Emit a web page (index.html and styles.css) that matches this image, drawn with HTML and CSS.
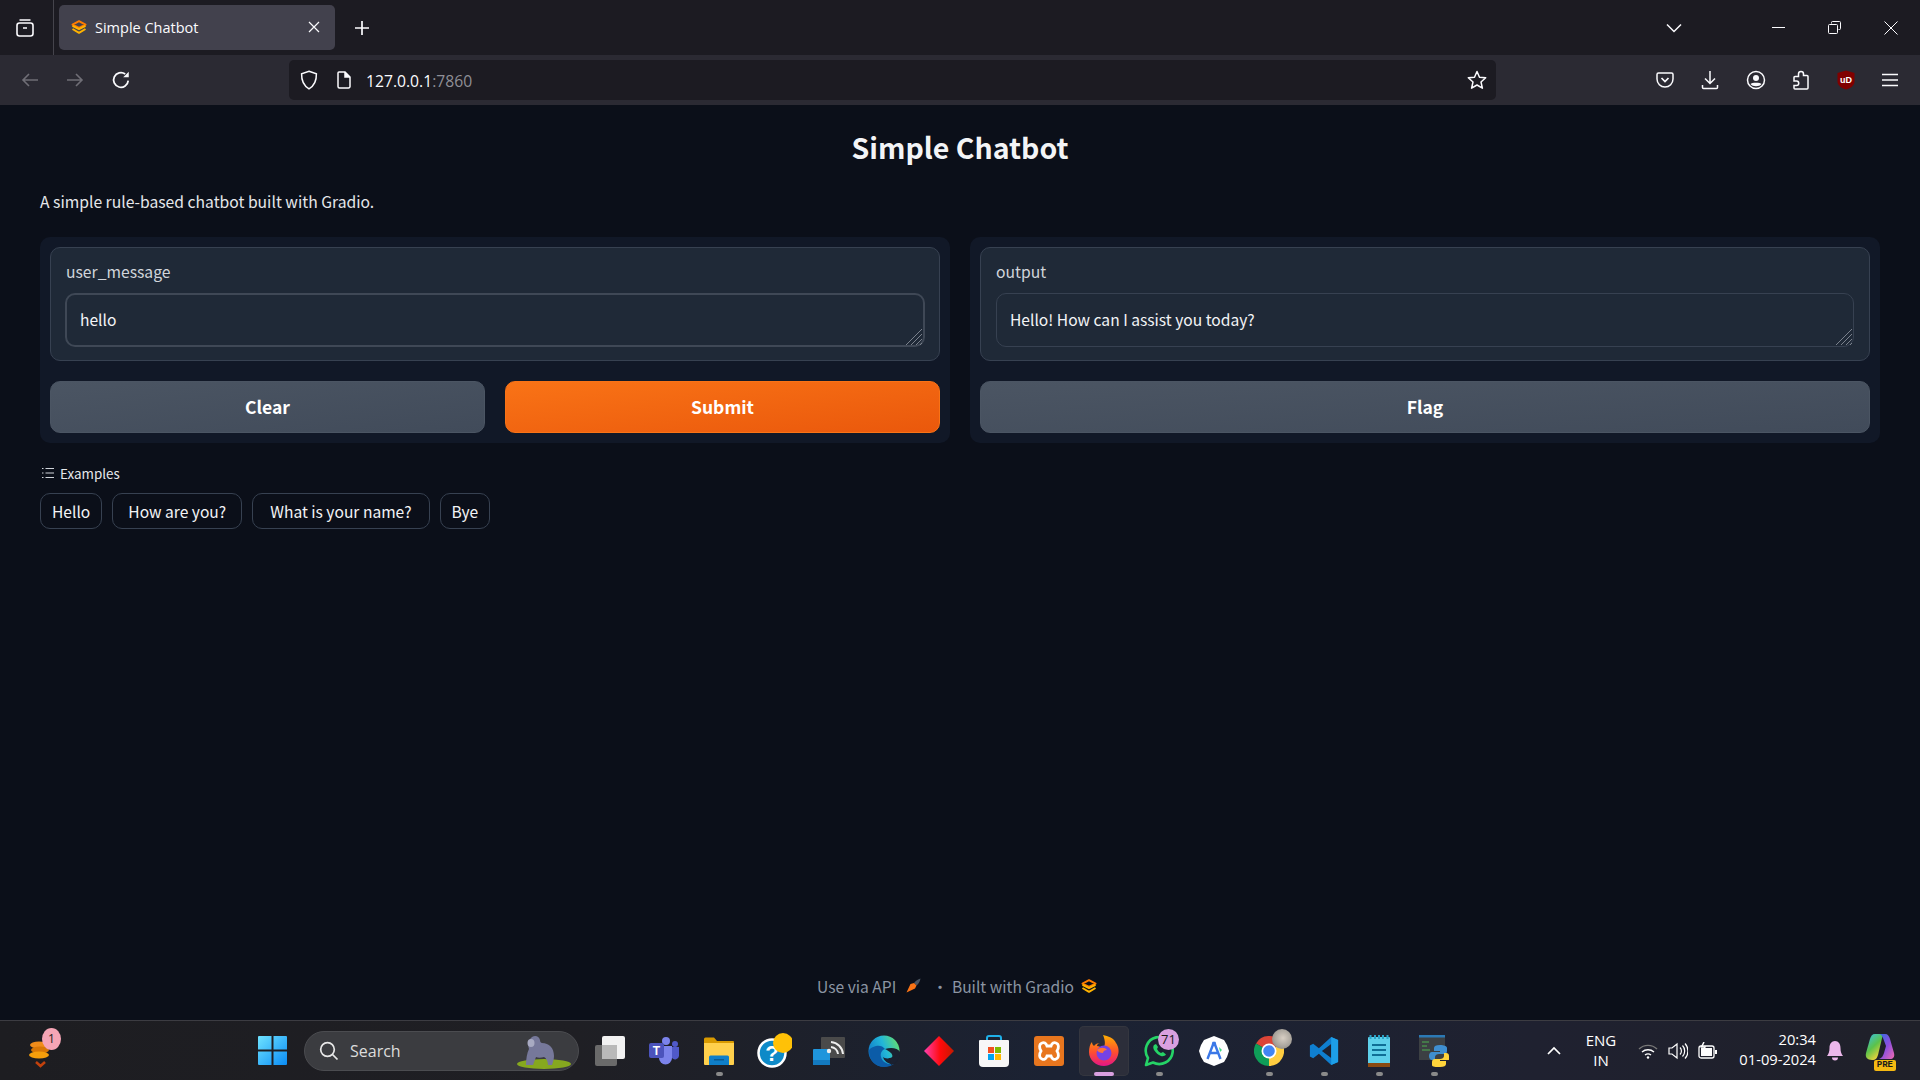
FILE: index.html
```html
<!DOCTYPE html>
<html lang="en">
<head>
    <meta charset="UTF-8">
    <title>Simple Chatbot</title>
    <link rel="stylesheet" href="styles.css">
</head>
<body>
    <svg class="defs" width="0" height="0">
        <defs>
            <symbol id="gradio" viewBox="0 0 16 14">
                <path d="M8 1.200 14.500 4.600 8 8 1.500 4.600Z" fill="none" stroke="#ff7c00" stroke-width="2" stroke-linejoin="round"/>
                <path d="M1.500 5.800 8 9.200 14.500 5.800M1.500 9 8 12.800 14.500 9" fill="none" stroke="#ffb300" stroke-width="2" stroke-linejoin="round"/>
            </symbol>
        </defs>
    </svg>

    <div class="tabbar">
        <div class="tab-list-btn">
            <svg width="20" height="20" viewBox="0 0 20 20" fill="none" stroke="#fbfbfe" stroke-width="1.6"><rect x="2" y="5" width="16" height="13" rx="2.5"/><path d="M4.5 2h11M8 10h4"/></svg>
        </div>
        <div class="tab">
            <svg class="tab-favicon" width="16" height="14"><use href="#gradio"/></svg>
            <span class="tab-title">Simple Chatbot</span>
            <svg class="tab-close" width="12" height="12" viewBox="0 0 12 12" stroke="#fbfbfe" stroke-width="1.2"><path d="M1 1l10 10M11 1 1 11"/></svg>
        </div>
        <svg class="new-tab" width="16" height="16" viewBox="0 0 16 16" stroke="#fbfbfe" stroke-width="1.7"><path d="M8 1v14M1 8h14"/></svg>
        <div class="window-controls">
            <svg class="tabs-menu" width="16" height="10" viewBox="0 0 16 10" fill="none" stroke="#fbfbfe" stroke-width="1.5"><path d="M1 1.5 8 8.5l7-7"/></svg>
            <svg class="win-btn" width="13" height="13" viewBox="0 0 13 13" stroke="#fbfbfe" stroke-width="1"><path d="M0 6.5h13"/></svg>
            <svg class="win-btn" width="13" height="13" viewBox="0 0 13 13" fill="none" stroke="#fbfbfe" stroke-width="1"><path d="M3.5 2.5V1.500a1 1 0 0 1 1-1h7a1 1 0 0 1 1 1v6a1 1 0 0 1-1 1h-1"/><rect x=".5" y="3.5" width="9" height="9" rx="1"/></svg>
            <svg class="win-btn" width="14" height="14" viewBox="0 0 14 14" stroke="#fbfbfe" stroke-width="1"><path d="M.5.5l13 13M13.500.5l-13 13"/></svg>
        </div>
    </div>

    <div class="navbar">
        <div class="nav-buttons">
            <svg width="18" height="16" viewBox="0 0 18 16" fill="none" stroke="#6f6e76" stroke-width="1.6"><path d="M17 8H2M8 2 2 8l6 6"/></svg>
            <svg width="18" height="16" viewBox="0 0 18 16" fill="none" stroke="#6f6e76" stroke-width="1.6"><path d="M1 8h15M10 2l6 6-6 6"/></svg>
            <svg width="20" height="20" viewBox="0 0 18 18" fill="none" stroke="#fbfbfe" stroke-width="1.6"><path d="M15.500 9.500A6.600 6.600 0 1 1 12.800 3.600"/><path d="M16 1.500v5h-5z" fill="#fbfbfe" stroke="none"/></svg>
        </div>
        <div class="urlbar">
            <svg width="18" height="20" viewBox="0 0 18 20" fill="none" stroke="#fbfbfe" stroke-width="1.5"><path d="M9 1.200 16.400 3.800C16.600 11 14 16 9 18.800 4 16 1.400 11 1.600 3.800Z"/></svg>
            <svg class="url-page" width="15" height="18" viewBox="0 0 15 18" fill="none" stroke="#fbfbfe" stroke-width="1.5"><path d="M3 1h6l5 5v9.500a1.500 1.500 0 0 1-1.500 1.500h-9A1.500 1.500 0 0 1 2 15.500V2a1 1 0 0 1 1-1Z"/><path d="M9 1v5h5" fill="#fbfbfe"/></svg>
            <span class="url-text">127.0.0.1<span class="url-port">:7860</span></span>
            <svg class="url-star" width="20" height="20" viewBox="0 0 20 20" fill="none" stroke="#fbfbfe" stroke-width="1.5" stroke-linejoin="round"><path d="M10 1.500 12.500 7.200 18.700 7.800 14 12 15.400 18.200 10 15 4.600 18.200 6 12 1.300 7.800 7.500 7.200Z"/></svg>
        </div>
        <div class="nav-tools">
            <svg width="18" height="18" viewBox="0 0 18 18" fill="none" stroke="#fbfbfe" stroke-width="1.5"><path d="M2.500 2h13A1.500 1.500 0 0 1 17 3.500V8A8 8 0 0 1 1 8V3.500A1.500 1.500 0 0 1 2.500 2Z"/><path d="M5.500 7 9 10.500 12.500 7" stroke-width="1.700"/></svg>
            <svg width="18" height="20" viewBox="0 0 18 20" fill="none" stroke="#fbfbfe" stroke-width="1.5"><path d="M9 1v12M4 8.500 9 13.500l5-5"/><path d="M1.500 15v2.500a1 1 0 0 0 1 1h13a1 1 0 0 0 1-1V15"/></svg>
            <svg width="20" height="20" viewBox="0 0 20 20" fill="none" stroke="#fbfbfe" stroke-width="1.5"><circle cx="10" cy="10" r="8.500"/><circle cx="10" cy="8" r="3" fill="#fbfbfe" stroke="none"/><path d="M4.500 14c1-1.800 10-1.800 11 0-2 3-9 3-11 0Z" fill="#fbfbfe" stroke="none"/></svg>
            <svg width="18" height="20" viewBox="0 0 18 20" fill="none" stroke="#fbfbfe" stroke-width="1.5"><path d="M9 1.500c1.500 0 2.500 1 2.500 2.500v1.500h3.500a1 1 0 0 1 1 1V18a1 1 0 0 1-1 1H3a1 1 0 0 1-1-1v-2.500h2.500a2.200 2.200 0 0 0 0-4.500H2V7.500a1 1 0 0 1 1-1h3.500V4C6.500 2.500 7.500 1.500 9 1.500Z"/></svg>
            <svg width="18" height="20" viewBox="0 0 18 20"><path d="M9 .5 17.500 3V12C17 16 13 18.500 9 19.500 5 18.500 1 16 .5 12V3Z" fill="#800000"/><text x="9" y="12.500" class="ublock-text">uD</text></svg>
            <svg width="16" height="14" viewBox="0 0 16 14" stroke="#fbfbfe" stroke-width="1.5"><path d="M0 1.500h16M0 7h16M0 12.500h16"/></svg>
        </div>
    </div>

    <main class="page">
        <h1 class="page-title">Simple Chatbot</h1>
        <p class="page-desc">A simple rule-based chatbot built with Gradio.</p>
        <div class="columns">
            <section class="panel">
                <div class="field">
                    <label class="field-label">user_message</label>
                    <div class="input-wrap">
                        <textarea class="input input-focus" rows="1">hello</textarea>
                        <svg class="resizer" width="18" height="18" viewBox="0 0 18 18" stroke="#7a818c" stroke-width="1"><path d="M1 17 17 1M6 17 17 6M11 17l6-6M15 17l2-2"/></svg>
                    </div>
                </div>
                <div class="btn-row">
                    <button class="btn">Clear</button>
                    <button class="btn btn-primary">Submit</button>
                </div>
            </section>
            <section class="panel">
                <div class="field">
                    <label class="field-label">output</label>
                    <div class="input-wrap">
                        <textarea class="input" rows="1">Hello! How can I assist you today?</textarea>
                        <svg class="resizer" width="18" height="18" viewBox="0 0 18 18" stroke="#7a818c" stroke-width="1"><path d="M1 17 17 1M6 17 17 6M11 17l6-6M15 17l2-2"/></svg>
                    </div>
                </div>
                <div class="btn-row">
                    <button class="btn">Flag</button>
                </div>
            </section>
        </div>
        <div class="examples-label">
            <svg width="12" height="12" viewBox="0 0 12 12" stroke="#d1d5db" stroke-width="1"><path d="M3.500 1.500H12M3.500 6H12M3.500 10.500H12M0 1.500h1.500M0 6h1.500M0 10.500h1.500"/></svg>
            <span>Examples</span>
        </div>
        <div class="examples">
            <button class="chip">Hello</button>
            <button class="chip chip-wide">How are you?</button>
            <button class="chip chip-wider">What is your name?</button>
            <button class="chip">Bye</button>
        </div>
        <footer class="page-footer">
            <span>Use via API</span>
            <svg class="rocket" width="16" height="16" viewBox="0 0 16 16"><path d="M15.500.5C13 1 10.500 3 9 5l2.500 2.500C13.500 6 15 3.500 15.500.5Z" fill="#4b5563"/><path d="M9 5 5.500 6 1.500 14.500 10 10.500 11.500 7.500Z" fill="#f97316"/></svg>
            <span class="footer-dot">·</span>
            <span>Built with Gradio</span>
            <svg class="footer-logo" width="16" height="14"><use href="#gradio"/></svg>
        </footer>
    </main>

    <div class="taskbar">
        <div class="widget">
            <svg width="26" height="36" viewBox="0 0 26 36">
                <ellipse cx="11" cy="12" rx="9" ry="3.500" fill="#f08c1a"/><ellipse cx="12" cy="17" rx="9" ry="3.500" fill="#d97706"/><ellipse cx="11" cy="22" rx="10" ry="3.500" fill="#f59e0b"/>
                <path d="M8 29l4.500 4 4.500-4" fill="none" stroke="#c2410c" stroke-width="2.500"/>
            </svg>
            <span class="badge badge-pink">1</span>
        </div>
        <svg class="start" width="29" height="29" viewBox="0 0 29 29">
            <defs><linearGradient id="win" x1="0" y1="0" x2="1" y2="1"><stop offset="0" stop-color="#6fe3ff"/><stop offset="1" stop-color="#0a8cf5"/></linearGradient></defs>
            <path d="M0 1a1 1 0 0 1 1-1h12.500v13.500H0ZM15.500 0H28a1 1 0 0 1 1 1v12.500H15.500ZM0 15.500h13.500V29H1a1 1 0 0 1-1-1ZM15.500 15.500H29V28a1 1 0 0 1-1 1H15.500Z" fill="url(#win)"/>
        </svg>
        <div class="search">
            <svg width="20" height="20" viewBox="0 0 20 20" fill="none" stroke="#e8e8e8" stroke-width="1.700"><circle cx="8.500" cy="8.500" r="6.800"/><path d="M13.500 13.500 18.500 18.500"/></svg>
            <span>Search</span>
            <svg class="gorilla" width="56" height="36" viewBox="0 0 56 36">
                <ellipse cx="28" cy="30" rx="27" ry="5" fill="#86a81f"/>
                <path d="M10 31c0-6 1-12 3-16-1-3-1-9 3-12 3-2 7-1 8 3 0 2 1 3 2 3 7 0 12 5 12 13 0 3-1 6-2 9h-4c0-4-2-7-4-8-3 1-6 1-8 0l-3 8Z" fill="#76789a"/>
                <ellipse cx="15" cy="9" rx="3.500" ry="4" fill="#a8aac2"/>
            </svg>
        </div>
        <svg class="task-view" width="30" height="30" viewBox="0 0 30 30"><rect x="0" y="9" width="22" height="21" rx="2" fill="#6a6a6a"/><rect x="7" y="0" width="23" height="23" rx="2" fill="#f2f2f2"/><rect x="7" y="9" width="15" height="14" fill="#b9b9b9"/></svg>

        <div class="apps">
            <div class="app">
                <svg width="30" height="30" viewBox="0 0 30 30"><circle cx="17" cy="5" r="4" fill="#7b83eb"/><circle cx="26" cy="8" r="3" fill="#5059c9"/><path d="M10 10h13v12a6.500 6.500 0 0 1-13 0Z" fill="#7b83eb"/><path d="M23 11h7v9a4 4 0 0 1-7 2Z" fill="#5059c9"/><rect x="0" y="7" width="15" height="15" rx="2" fill="#4b53bc"/><text x="7.500" y="19" class="teams-text">T</text></svg>
            </div>
            <div class="app app-running">
                <svg width="30" height="30" viewBox="0 0 30 30"><path d="M0 3a1.500 1.500 0 0 1 1.500-1.500H10L13 5h16a1 1 0 0 1 1 1v3H0Z" fill="#d99a00"/><path d="M0 7h30v21a1 1 0 0 1-1 1H1a1 1 0 0 1-1-1Z" fill="#ffd04c"/><path d="M5 29v-8a1.500 1.500 0 0 1 1.500-1.500h17A1.500 1.500 0 0 1 25 21v8Z" fill="#0f7fc9"/><rect x="10" y="23" width="10" height="1.500" fill="#0b5a91"/></svg>
            </div>
            <div class="app">
                <svg width="36" height="36" viewBox="0 0 36 36"><circle cx="16" cy="20" r="13.500" fill="#0e8ac8" stroke="#fff" stroke-width="2.500"/><text x="16" y="28" class="help-text">?</text><circle cx="27" cy="10" r="10" fill="#ffc107"/></svg>
            </div>
            <div class="app">
                <svg width="32" height="28" viewBox="0 0 32 28"><rect x="8" y="0" width="24" height="21" rx="1" fill="#4a4a4a"/><path d="M18 10a8 8 0 0 1 7 7M18 5a13 13 0 0 1 12 12" fill="none" stroke="#eee" stroke-width="2"/><path d="M1 12h15a1 1 0 0 1 1 1v15H0V13a1 1 0 0 1 1-1Z" fill="#1f95dc"/><rect x="0" y="23" width="17" height="5" fill="#137ac0"/><circle cx="16" cy="14" r="2.200" fill="#eee"/></svg>
            </div>
            <div class="app">
                <svg width="32" height="32" viewBox="0 0 32 32">
                    <defs>
                        <linearGradient id="edge" x1="0" y1=".7" x2="1" y2=".3"><stop offset="0" stop-color="#0f77c9"/><stop offset=".55" stop-color="#22b6d8"/><stop offset="1" stop-color="#62dd72"/></linearGradient>
                    </defs>
                    <circle cx="16" cy="16" r="15.500" fill="url(#edge)"/>
                    <path d="M1 16c0 9 6 16 15 16 4 0 7-1 10-3-6 1-12-2-13-7-1-4 1-7 4-8-2-3-6-4-9-3-4 1-7 3-7 5Z" fill="#0c5ca8"/>
                    <path d="M17 14c6-2 13-1 15 3v1c0 5-3 9-6 11-5 1-10-3-11-7 1 1 4 2 7 1 3 0 3-3 1-5-2-2-4-3-6-4Z" fill="#1b2130"/>
                    <path d="M32 17c0 6-4 11-9 13l-2-7c5 0 8-2 11-6Z" fill="#1b2130"/>
                </svg>
            </div>
            <div class="app">
                <svg width="30" height="30" viewBox="0 0 30 30">
                    <defs><linearGradient id="gem" x1="0" y1="0" x2="1" y2="0"><stop offset="0" stop-color="#ff40b0"/><stop offset=".55" stop-color="#ff0a0a"/><stop offset="1" stop-color="#c21a00"/></linearGradient></defs>
                    <path d="M15 0 30 15 15 30 0 15Z" fill="url(#gem)"/>
                </svg>
            </div>
            <div class="app">
                <svg width="30" height="32" viewBox="0 0 30 32"><path d="M8 7V3a2 2 0 0 1 2-2h10a2 2 0 0 1 2 2v4" fill="none" stroke="#1fb0e8" stroke-width="2"/><path d="M1 5h28a1 1 0 0 1 1 1v22a4 4 0 0 1-4 4H4a4 4 0 0 1-4-4V6a1 1 0 0 1 1-1Z" fill="#f7f7f7"/><rect x="9" y="12" width="6" height="6" fill="#f25022"/><rect x="16" y="12" width="6" height="6" fill="#7fba00"/><rect x="9" y="19" width="6" height="6" fill="#00a4ef"/><rect x="16" y="19" width="6" height="6" fill="#ffb900"/></svg>
            </div>
            <div class="app">
                <svg width="30" height="30" viewBox="0 0 30 30"><rect width="30" height="30" rx="3" fill="#e8761e"/><path d="M8 7c2-1 4 0 5 3h4c1-3 3-4 5-3 3 1 3 5 1 8 2 3 2 7-1 8-2 1-4 0-5-3h-4c-1 3-3 4-5 3-3-1-3-5-1-8-2-3-2-7 1-8Z" fill="none" stroke="#fff" stroke-width="2.800"/></svg>
            </div>
            <div class="app app-active">
                <svg width="30" height="32" viewBox="0 0 30 32">
                    <defs><linearGradient id="fox" x1="0" y1="0" x2="0" y2="1"><stop offset="0" stop-color="#ffb000"/><stop offset=".55" stop-color="#ff4f2e"/><stop offset="1" stop-color="#e31587"/></linearGradient></defs>
                    <path d="M27 8c3 4 3 9 2 12-2 7-8 11-14 11C7 31 0 25 0 17 0 13 1 9 3 7c0 2 1 3 2 4 1-2 4-3 6-3-1 0-3 1-3 3 2 0 4 1 6 2 3-3 2-8 0-13 5 1 11 3 13 8Z" fill="url(#fox)"/>
                    <circle cx="15" cy="18" r="7.500" fill="#7542e5"/>
                    <path d="M8 15c3-3 8-3 10 0-2 0-4 1-4 3-3 0-5-1-6-3Z" fill="#ff7139"/>
                </svg>
            </div>
            <div class="app app-running">
                <svg width="30" height="32" viewBox="0 0 30 32" fill="none"><path d="M2 30l2-7A13.500 13.500 0 1 1 9 27.500Z" stroke="#25d366" stroke-width="2.600" stroke-linejoin="round"/><path d="M10 10c-1 1-1 3 0 5 2 3 4 5 7 6 2 .5 4 0 5-1.500l-3-2.500-2 1c-2-1-3-2-4-4l1-2-2-3Z" fill="#25d366"/></svg>
                <span class="badge badge-purple">71</span>
            </div>
            <div class="app">
                <svg width="30" height="30" viewBox="0 0 30 30"><path d="M15 0 20 2 25 4 28 9 30 15 28 21 25 26 20 28 15 30 10 28 5 26 2 21 0 15 2 9 5 4 10 2Z" fill="#fff"/><path d="M15 6 8.500 23M15 6l6.500 17M10.500 17h9" fill="none" stroke="#3b78e7" stroke-width="2.400"/><path d="M20 11l3 3-2 2Z" fill="#3ddc84"/><circle cx="15" cy="8" r="2.200" fill="#3b78e7"/></svg>
            </div>
            <div class="app app-running">
                <svg width="30" height="30" viewBox="0 0 30 30"><path d="M15 15 2 7.500A15 15 0 0 1 28 7.500Z" fill="#db4437"/><path d="M15 15V30A15 15 0 0 1 2 7.500Z" fill="#0f9d58"/><path d="M15 15 28 7.500A15 15 0 0 1 15 30Z" fill="#ffcd40"/><circle cx="15" cy="15" r="7.500" fill="#fff"/><circle cx="15" cy="15" r="5.800" fill="#4285f4"/></svg>
                <span class="avatar"></span>
            </div>
            <div class="app app-running">
                <svg width="30" height="30" viewBox="0 0 100 100"><path fill-rule="evenodd" d="M74 3 33 41 14 26 3 32V68L14 74 33 59 74 97 97 87V13ZM74 27 43 50 74 73Z" fill="#0f7fd0"/><path fill-rule="evenodd" d="M74 3 97 13V87L74 97Z" fill="#1d9fe8"/></svg>
            </div>
            <div class="app app-running">
                <svg width="22" height="32" viewBox="0 0 22 32"><rect x="0" y="2" width="22" height="29" rx="1" fill="#5ed0ea"/><rect x="0" y="28" width="22" height="4" fill="#8a4a12"/><path d="M4 10h14M4 15h14M4 20h14" stroke="#0f6f96" stroke-width="2"/><path d="M2.500 0v4M7 0v4M11 0v4M15 0v4M19.500 0v4" stroke="#2aa3c7" stroke-width="2"/></svg>
            </div>
            <div class="app app-running">
                <svg width="30" height="32" viewBox="0 0 30 32"><rect width="26" height="25" fill="#3c4043"/><rect width="26" height="2.500" fill="#2b79b5"/><path d="M3 7h7M3 11h5M3 15h8" stroke="#4caf50" stroke-width="1"/><path d="M20 10c-4 0-6 1-6 3v3h6v1h-8c-2 0-3 2-3 4s1 4 3 4h3v-3c0-2 2-3 4-3h5c2 0 3-1 3-3v-3c0-2-3-3-7-3Z" fill="#3f8fd0" transform="translate(1 0)"/><path d="M21 32c4 0 6-1 6-3v-3h-6v-1h8c2 0 1-2 1-4s-1-3-3-3h-2v3c0 2-2 3-4 3h-5c-2 0-3 1-3 3v3c0 2 4 2 8 2Z" fill="#ffd43b"/></svg>
            </div>
        </div>

        <div class="tray">
            <svg class="tray-chevron" width="14" height="9" viewBox="0 0 14 9" fill="none" stroke="#fff" stroke-width="1.700"><path d="M1 8l6-6 6 6"/></svg>
            <div class="lang">ENG<br>IN</div>
            <div class="tray-icons">
                <svg width="20" height="16" viewBox="0 0 20 16" fill="none" stroke="#fff" stroke-width="1.400"><path d="M1 6a13 13 0 0 1 18 0" stroke="#777"/><path d="M4 9a9 9 0 0 1 12 0M7 12a5 5 0 0 1 6 0"/><circle cx="10" cy="14.500" r="1.200" fill="#fff" stroke="none"/></svg>
                <svg width="20" height="20" viewBox="0 0 20 20" fill="none" stroke="#fff" stroke-width="1.200"><path d="M1 7h3l5-4v14l-5-4H1Z"/><path d="M12 6.500a5 5 0 0 1 0 7M14.500 4.500a8 8 0 0 1 0 11M17 2.500a11 11 0 0 1 0 15"/></svg>
                <svg width="20" height="18" viewBox="0 0 20 18" fill="none" stroke="#fff" stroke-width="1.300"><rect x="1" y="4" width="15" height="12" rx="2"/><path d="M18 8v4" stroke-width="2"/><path d="M3 6h11v8H3Z" fill="#fff" stroke="none"/><path d="M6 0 3.500 5H7L5 9" stroke-width="1.500"/></svg>
            </div>
            <div class="clock"><span>20:34</span><span>01-09-2024</span></div>
            <svg class="bell" width="16" height="20" viewBox="0 0 16 20"><path d="M8 0c3.500 0 5.500 3 5.500 7 0 4 1 6 2.500 8H0c1.500-2 2.500-4 2.500-8C2.500 3 4.500 0 8 0Z" fill="#edb8ec"/><path d="M5 16.500h6a3 3 0 0 1-6 0Z" fill="#edb8ec"/></svg>
            <div class="copilot">
                <svg width="30" height="30" viewBox="0 0 30 30">
                    <defs>
                        <linearGradient id="cop" x1="0" y1="0" x2=".6" y2="1"><stop offset="0" stop-color="#35c1f1"/><stop offset=".55" stop-color="#5cc24a"/><stop offset="1" stop-color="#f5d33a"/></linearGradient>
                        <linearGradient id="cop2" x1="0" y1="0" x2="1" y2="1"><stop offset="0" stop-color="#2f6fe0"/><stop offset=".5" stop-color="#8a4fe0"/><stop offset="1" stop-color="#f06ab0"/></linearGradient>
                    </defs>
                    <path d="M10 1h8l-5 21c-1 3-2 5-6 5-5 0-7-3-6-7L5 6c1-3 2-5 5-5Z" fill="url(#cop)"/>
                    <path d="M14 1h6c3 0 4 2 5 5l4 14c1 4-1 6-4 6H14c3-1 4-3 5-6l2-7-3-8c-1-2-2-4-4-4Z" fill="url(#cop2)"/>
                </svg>
                <span class="pre-tag">PRE</span>
            </div>
        </div>
    </div>
</body>
</html>
```

FILE: styles.css
```css
* {
    box-sizing: border-box;
}

html, body {
    height: 100%;
}

body {
    margin: 0;
    display: flex;
    flex-direction: column;
    height: 1080px;
    overflow: hidden;
    background-color: #0b0f19;
    font-family: "Noto Sans CJK SC", "Noto Sans", sans-serif;
    color: #f3f4f6;
}

.defs {
    position: absolute;
}

/* browser chrome */
.tabbar {
    height: 55px;
    flex: none;
    display: flex;
    align-items: center;
    background-color: #1c1b22;
    font-family: "Open Sans", "Noto Sans", sans-serif;
}

.tab-list-btn {
    width: 54px;
    height: 55px;
    display: flex;
    align-items: center;
    justify-content: center;
    padding-right: 4px;
    border-right: 1px solid #45444c;
}

.tab {
    width: 276px;
    height: 45px;
    margin: -1px 0 0 5px;
    display: flex;
    align-items: center;
    padding: 0 15px 0 12px;
    border-radius: 5px;
    background-color: #42414d;
    color: #fbfbfe;
    font-size: 14.5px;
}

.tab-title {
    flex: 1;
    margin: 1px 0 0 8px;
}

.new-tab {
    margin: 1px 0 0 19px;
}

.window-controls {
    margin-left: auto;
    display: flex;
    align-items: center;
    padding-right: 22px;
    gap: 43px;
}

.tabs-menu {
    margin-right: 47px;
}

.navbar {
    height: 50px;
    flex: none;
    display: flex;
    align-items: center;
    background-color: #2b2a33;
    font-family: "Open Sans", "Noto Sans", sans-serif;
}

.nav-buttons {
    width: 289px;
    display: flex;
    align-items: center;
    padding-left: 21px;
    gap: 27px;
}

.urlbar {
    width: 1207px;
    height: 40px;
    display: flex;
    align-items: center;
    padding: 0 9px 0 11px;
    border-radius: 5px;
    background-color: #1c1b22;
}

.url-page {
    margin-left: 18px;
}

.url-text {
    margin: 2px 0 0 15px;
    color: #fbfbfe;
    font-size: 15.7px;
}

.url-port {
    color: #8f8f96;
}

.url-star {
    margin-left: auto;
}

.ublock-text {
    fill: #fff;
    font-family: "Liberation Sans", sans-serif;
    font-size: 9px;
    font-weight: 700;
    text-anchor: middle;
}

.nav-tools {
    flex: 1;
    display: flex;
    align-items: center;
    justify-content: space-between;
    padding: 0 22px 0 160px;
}

/* gradio page */
.page {
    flex: 1;
    display: flex;
    flex-direction: column;
    padding: 0 40px;
    min-height: 0;
}

.page-title {
    margin: 22px 0 0;
    text-align: center;
    font-size: 28.5px;
    font-weight: 600;
    line-height: 40px;
    color: #f3f4f6;
}

.page-desc {
    margin: 23px 0 0;
    font-size: 15.7px;
    line-height: 24px;
    color: #e5e7eb;
}

.columns {
    display: flex;
    gap: 20px;
    margin-top: 23px;
}

.panel {
    flex: 1;
    min-width: 0;
    display: flex;
    flex-direction: column;
    gap: 20px;
    padding: 10px;
    border-radius: 10px;
    background-color: #111827;
}

.field {
    padding: 11px 15px 13px;
    border: 1px solid #374151;
    border-radius: 10px;
    background-color: #1f2937;
}

.field-label {
    display: block;
    margin-bottom: 8px;
    font-size: 15.7px;
    line-height: 26px;
    color: #d1d5db;
}

.input-wrap {
    position: relative;
    height: 54px;
}

.input {
    display: block;
    width: 100%;
    height: 100%;
    padding: 12px 13px;
    border: 1px solid #374151;
    border-radius: 10px;
    background-color: #1f2937;
    color: #f3f4f6;
    font-family: inherit;
    font-size: 15.6px;
    line-height: 26px;
    resize: none;
    outline: none;
}

.input-focus {
    width: calc(100% + 2px);
    margin-left: -1px;
    border: 2px solid #3f4856;
    padding: 11px 13px;
}

.resizer {
    position: absolute;
    right: 1px;
    bottom: 1px;
}

.btn-row {
    display: flex;
    gap: 20px;
}

.btn {
    flex: 1;
    height: 52px;
    padding-bottom: 2px;
    border: 1px solid #4b5563;
    border-radius: 10px;
    background: linear-gradient(to bottom right, #4b5563, #414b5a);
    color: #fff;
    font-family: inherit;
    font-size: 17.5px;
    font-weight: 600;
}

.btn-primary {
    border-color: #f97316;
    background: linear-gradient(to bottom right, #f97316, #ea580c);
}

.examples-label {
    display: flex;
    align-items: center;
    gap: 6px;
    margin-top: 20px;
    padding-left: 2px;
    font-size: 13.4px;
    line-height: 20px;
    color: #e5e7eb;
}

.examples {
    display: flex;
    gap: 10px;
    margin-top: 10px;
}

.chip {
    height: 36px;
    padding: 0 11px;
    border: 1px solid #374151;
    border-radius: 10px;
    background-color: #0b0f19;
    color: #f3f4f6;
    font-family: inherit;
    font-size: 15.6px;
}

.chip-wide {
    padding: 0 15px;
}

.chip-wider {
    padding: 0 17px;
}

.page-footer {
    margin-top: auto;
    height: 68px;
    display: flex;
    align-items: center;
    justify-content: center;
    padding-right: 6px;
    font-size: 15.6px;
    color: #8c95a3;
}

.rocket {
    margin-left: 9px;
}

.footer-dot {
    margin: 0 4px 0 11px;
}

.footer-logo {
    margin-left: 7px;
}

/* windows taskbar */
.taskbar {
    height: 60px;
    flex: none;
    display: flex;
    align-items: center;
    border-top: 1px solid #3c3c42;
    background: linear-gradient(90deg, #1d1d21 0%, #1f1f24 30%, #1b2233 55%, #1f2130 80%, #1f2029 100%);
    font-family: "Open Sans", "Noto Sans", sans-serif;
    color: #fff;
}

.widget {
    position: relative;
    width: 52px;
    margin-left: 28px;
    height: 36px;
}

.badge {
    position: absolute;
    display: flex;
    align-items: center;
    justify-content: center;
    border-radius: 50%;
    color: #1a1a1a;
    font-size: 12px;
}

.badge-pink {
    top: -5px;
    left: 14px;
    width: 19px;
    height: 22px;
    background-color: #f6a5b5;
}

.badge-purple {
    top: 3px;
    right: 5px;
    width: 21px;
    height: 21px;
    background-color: #d9a0e0;
    font-size: 13px;
}

.start {
    margin-left: 178px;
}

.search {
    width: 275px;
    height: 40px;
    margin-left: 17px;
    display: flex;
    align-items: center;
    gap: 11px;
    padding-left: 14px;
    border: 1px solid #4b4c50;
    border-radius: 20px;
    background-color: #3b3c40;
    font-size: 16px;
    color: #dcdcdc;
}

.gorilla {
    margin-left: auto;
    margin-right: 6px;
    margin-top: 2px;
}

.task-view {
    margin-left: 16px;
}

.apps {
    display: flex;
    align-items: center;
    margin-left: 14px;
}

.app {
    position: relative;
    width: 50px;
    height: 50px;
    margin-right: 5px;
    display: flex;
    align-items: center;
    justify-content: center;
    border-radius: 5px;
}

.app-running::after,
.app-active::after {
    content: "";
    position: absolute;
    left: 50%;
    bottom: 0;
    width: 7px;
    height: 4px;
    margin-left: -3.5px;
    border-radius: 2px;
    background-color: #8a8a8a;
}

.app-active {
    background-color: #2c2e3a;
    box-shadow: inset 0 0 0 1px #34363f;
}

.app-active::after {
    width: 20px;
    margin-left: -10px;
    background-color: #d9a0e0;
}

.avatar {
    position: absolute;
    top: 3px;
    right: 2px;
    width: 20px;
    height: 20px;
    border-radius: 50%;
    background: radial-gradient(circle at 55% 45%, #d8cfc4 0%, #a9a49c 55%, #77736d 100%);
}

.teams-text {
    fill: #fff;
    font-family: "Liberation Sans", sans-serif;
    font-size: 12px;
    font-weight: 700;
    text-anchor: middle;
}

.help-text {
    fill: #fff;
    font-family: "Liberation Sans", sans-serif;
    font-size: 22px;
    font-weight: 700;
    text-anchor: middle;
}

.tray {
    flex: 1;
    display: flex;
    align-items: center;
    padding-left: 83px;
}

.lang {
    margin: 0 0 2px 18px;
    width: 44px;
    text-align: center;
    font-size: 15px;
    line-height: 20px;
}

.tray-icons {
    display: flex;
    align-items: center;
    gap: 10px;
    margin-left: 15px;
}

.clock {
    width: 82px;
    margin: 0 0 3px 16px;
    display: flex;
    flex-direction: column;
    align-items: flex-end;
    font-size: 14.7px;
    line-height: 20px;
    white-space: nowrap;
}

.bell {
    margin-left: 11px;
}

.copilot {
    position: relative;
    margin-left: 22px;
}

.pre-tag {
    position: absolute;
    right: -1px;
    bottom: -3px;
    padding: 0 3px;
    border-radius: 2px;
    background-color: #f5b912;
    color: #1a1a1a;
    font-family: "Liberation Mono", monospace;
    font-size: 9px;
    font-weight: 700;
    line-height: 11px;
}
```
